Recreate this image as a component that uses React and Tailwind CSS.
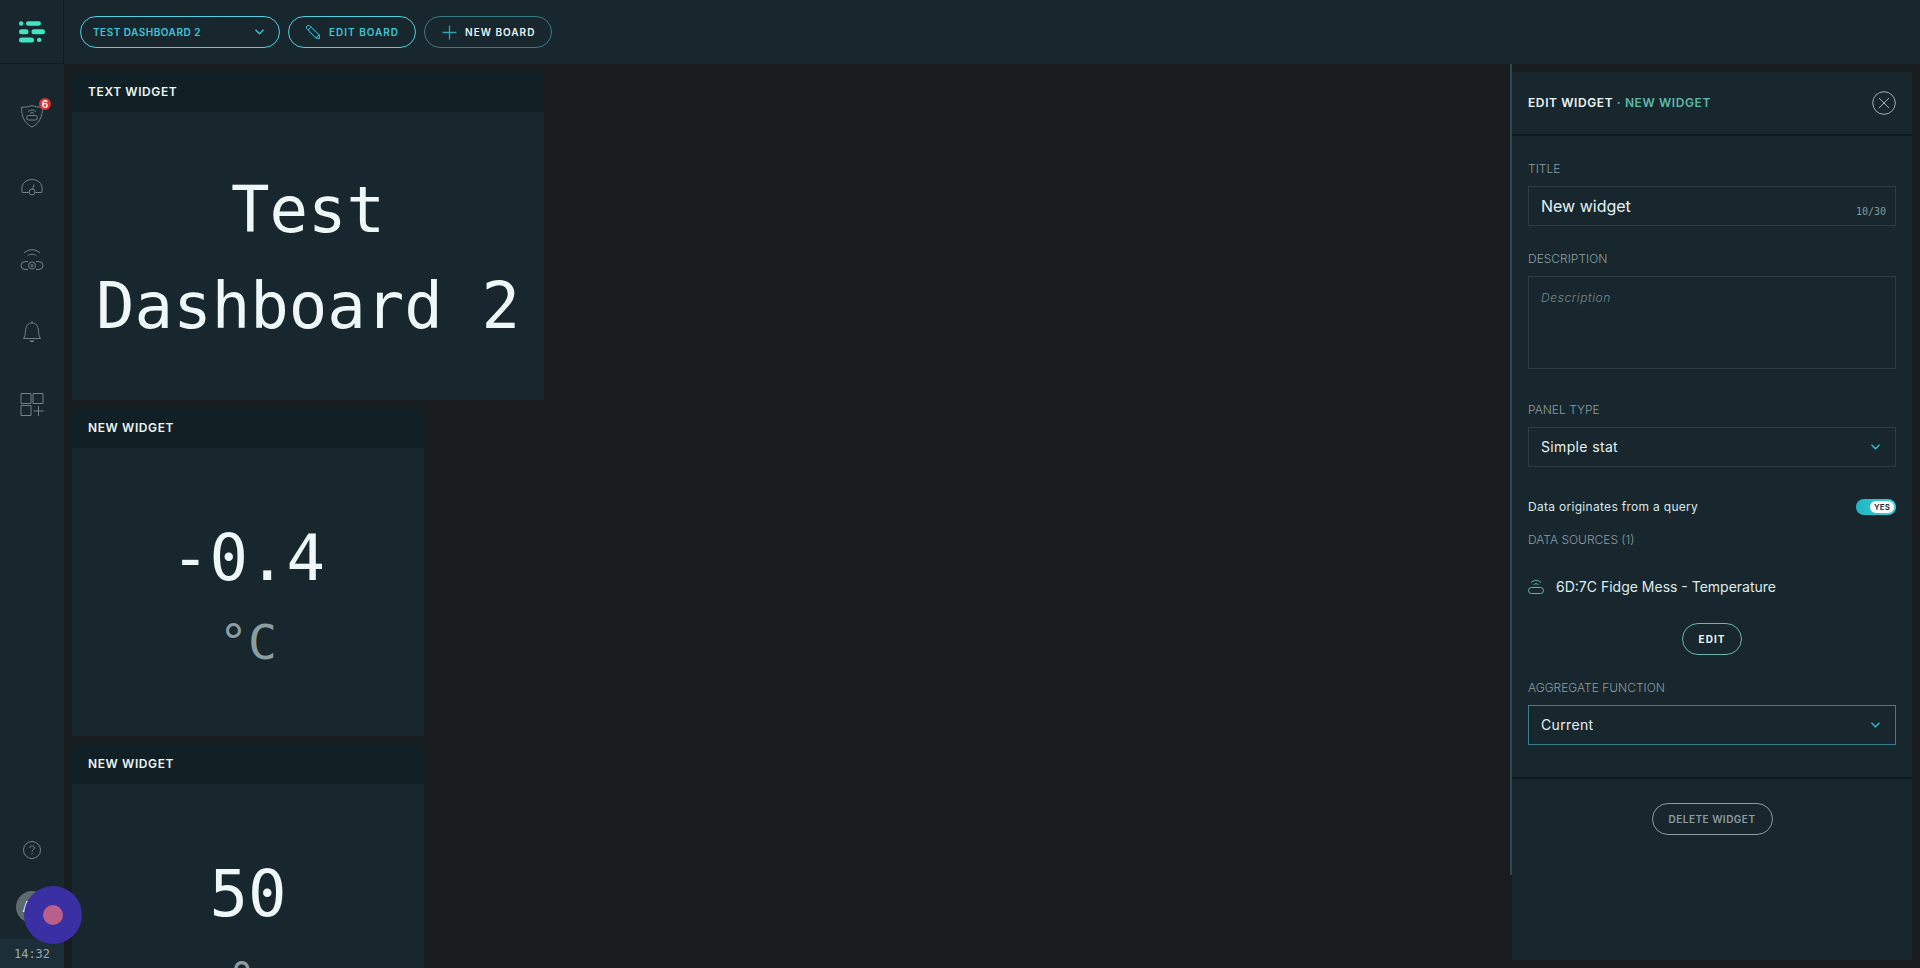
import {useState} from 'react'

const widgets = [
    {id: 1, title: 'Text widget', text: 'Test Dashboard 2', width: 'w-[472px]'},
    {id: 2, title: 'New widget', text: '-0.4', unit: '°C', width: 'w-[352px]'},
    {id: 3, title: 'New widget', text: '50', unit: '%', width: 'w-[352px]'},
]

const mono = "font-['DejaVu_Sans_Mono',monospace]"
const labelStyle = 'block mb-2 text-xs leading-[18px] font-light uppercase text-[#8c9da1]'
const fieldStyle = 'block w-full border bg-transparent px-3 text-[#e6f1f2] outline-none'

function Logo() {
    return (
        <svg width="26" height="22" viewBox="0 0 26 22" fill="#3ee6c4">
            <circle cx="2.2" cy="2.5" r="2.2" />
            <rect x="7" y="0.2" width="15" height="4.6" rx="2.3" />
            <rect x="0" y="8.2" width="9.5" height="5" rx="2.5" />
            <rect x="12.5" y="8.2" width="13.5" height="5" rx="2.5" />
            <rect x="0" y="16.4" width="15" height="5" rx="2.5" />
            <circle cx="20.2" cy="18.9" r="2.2" />
        </svg>
    )
}

function ShieldIcon() {
    return (
        <svg width="24" height="24" viewBox="0 0 24 24" fill="none" stroke="currentColor">
            <path d="M12 1.5C8.5 2.8 5 3.4 1.5 3.2c0 8.500 2.500 16 10.500 19.800 8-3.800 10.500-11.300 10.500-19.800C19 3.400 15.500 2.800 12 1.500z" />
            <rect x="6.500" y="11.500" width="11" height="4.500" rx="2.200" />
            <path d="M8 7.800c2-2.400 6-2.400 8 0M10 9.500c1.200-1.200 2.800-1.200 4 0" />
        </svg>
    )
}

function GaugeIcon() {
    return (
        <svg width="24" height="24" viewBox="0 0 24 24" fill="none" stroke="currentColor">
            <path d="M8.800 16.500H2.300C.2 9.500 4.500 3.500 12 3.500s11.800 6 9.700 13h-6.500" />
            <circle cx="12" cy="16" r="3" />
            <path d="M12.800 13L14 8.500" />
        </svg>
    )
}

function SensorIcon() {
    return (
        <svg width="24" height="24" viewBox="0 0 24 24" fill="none" stroke="currentColor">
            <path d="M4 5c4.500-4.400 11.500-4.400 16 0M7.500 8c2.600-2.400 6.400-2.400 9 0" />
            <path d="M8 13.500H5a4 4 0 1 0 0 8h3M16 13.500h3a4 4 0 1 1 0 8h-3" />
            <circle cx="12" cy="17.500" r="3.500" />
            <circle cx="12" cy="17.500" r="1" />
        </svg>
    )
}

function BellIcon() {
    return (
        <svg width="24" height="24" viewBox="0 0 24 24" fill="none" stroke="currentColor">
            <path d="M3.500 18.500h17c-1.500-2-1.800-4-2-7.500C18.200 6 16 3 12 3s-6.200 3-6.500 8c-.2 3.500-.5 5.500-2 7.500zM12 3V1" />
            <path d="M9.500 20.500h5c-.6 2.200-4.400 2.200-5 0z" fill="currentColor" stroke="none" />
        </svg>
    )
}

function BoardsIcon() {
    return (
        <svg width="24" height="24" viewBox="0 0 24 24" fill="none" stroke="currentColor">
            <path d="M1 1.500h10v10H1zM13 1.500h10v10H13zM1 13.500h10v10H1zM18.500 14v10M13.500 19h10" />
        </svg>
    )
}

function HelpIcon() {
    return (
        <svg width="18" height="18" viewBox="0 0 18 18" fill="none" stroke="currentColor">
            <circle cx="9" cy="9" r="8.500" />
            <path d="M6.700 7c0-3 4.700-3 4.700 0 0 1.700-2.400 1.700-2.400 3.700M9 12v1.200" />
        </svg>
    )
}

function Chevron({className}) {
    return (
        <svg className={className} width="9" height="6" viewBox="0 0 9 6" fill="none" stroke="currentColor" strokeWidth="1.3">
            <path d="M.5.8l4 4 4-4" />
        </svg>
    )
}

const links = [
    {name: 'Security', Icon: ShieldIcon, badge: 6},
    {name: 'Dashboard', Icon: GaugeIcon},
    {name: 'Sensors', Icon: SensorIcon},
    {name: 'Alerts', Icon: BellIcon},
    {name: 'Boards', Icon: BoardsIcon},
]

function Sidebar() {
    return (
        <aside className="w-16 shrink-0 flex flex-col bg-[#17272d] text-[#728388]">
            <a href="#" aria-label="Home" className="h-16 flex items-center justify-center border-r border-b border-[#0f1d22]">
                <Logo />
            </a>
            <nav className="flex-1 pt-4">
                {links.map(({name, Icon, badge}) => (
                    <a key={name} href="#" aria-label={name} className="h-[72px] flex items-center justify-center">
                        <span className="relative">
                            <Icon />
                            {badge && (
                                <span className="absolute -top-1.5 -right-[7px] size-3 rounded-full bg-[#dc3232] text-white text-[10px] leading-3 font-semibold text-center">{badge}</span>
                            )}
                        </span>
                    </a>
                ))}
            </nav>
            <div className="flex flex-col items-center">
                <button type="button" aria-label="Help" className="mb-8"><HelpIcon /></button>
                <button type="button" className="mb-4 size-8 rounded-full bg-[#5d6b6e] text-white text-sm font-medium">AB</button>
                <time className={`${mono} w-full bg-[#1c2f38] pt-[5px] pb-[3px] text-center text-xs leading-[21px] text-[#9aa9ad]`}>14:32</time>
            </div>
        </aside>
    )
}

function TopBar() {
    return (
        <header className="h-16 shrink-0 flex items-center gap-2 px-4 bg-[#17272d] text-[10px] font-semibold uppercase tracking-widest">
            <div className="relative">
                <select aria-label="Board" className="w-[200px] h-8 rounded-full border border-[#4fd0dc] pl-3 pr-8 appearance-none bg-transparent font-semibold uppercase tracking-wider text-[#3cc8dc] outline-none">
                    <option>Test dashboard 2</option>
                </select>
                <Chevron className="absolute right-4 top-[13px] text-[#3cc8dc] pointer-events-none" />
            </div>
            <button type="button" className="h-8 flex items-center gap-2 rounded-full border border-[#4fd0dc] px-4 uppercase text-[#3cc8dc]">
                <svg width="16" height="16" viewBox="0 0 16 16" fill="none" stroke="currentColor">
                    <path d="M1.500 4.200c-.8-1.700 1.200-3.500 2.800-2.600l10 9.200.2 3.700-3.800-.4zM3.200 6l2.700-2.900M11 13.600l3.300-2.800" />
                </svg>
                Edit board
            </button>
            <button type="button" className="h-8 flex items-center gap-2 rounded-full border border-[#3a7c86] px-4 uppercase text-[#e9f4f5]">
                <svg width="16" height="16" viewBox="0 0 16 16" fill="none" stroke="#3aa0ac" strokeWidth="1.300">
                    <path d="M8.500 1.500v14M1.500 8.500h14" />
                </svg>
                New board
            </button>
        </header>
    )
}

function Widget({widget}) {
    return (
        <section className={`${widget.width} h-[328px] shrink-0 flex flex-col bg-[#17272d]`}>
            <h2 className="h-10 px-4 flex items-center bg-[#112024] text-xs font-semibold uppercase tracking-wider text-[#ecf6f6]">{widget.title}</h2>
            <div className={`${mono} flex-1 px-4 pt-1 flex flex-col justify-center text-center`}>
                <p className="text-[64px] leading-[96px] text-[#eff8f9]">{widget.text}</p>
                {widget.unit && <p className="text-5xl leading-[72px] text-[#8b9da1]">{widget.unit}</p>}
            </div>
        </section>
    )
}

function EditPanel() {
    const [title, setTitle] = useState('New widget')
    const [description, setDescription] = useState('')
    const [query, setQuery] = useState(true)

    return (
        <div className="flex">
            <div className="w-0.5 h-[calc(100%-93px)] bg-[#2b4a52]"></div>
            <form className="w-[400px] my-2 mr-2 bg-[#17272d]" onSubmit={(e) => e.preventDefault()}>
                <div className="h-16 px-4 flex items-center justify-between border-b-2 border-[#0d1b20]">
                    <h2 className="text-xs font-semibold uppercase tracking-wider text-[#ecf6f6]">
                        Edit widget <span className="text-[#5fb9a8]">· New widget</span>
                    </h2>
                    <button type="button" aria-label="Close" className="text-[#9db0b4]">
                        <svg width="24" height="24" viewBox="0 0 24 24" fill="none" stroke="currentColor">
                            <circle cx="12" cy="12" r="11.300" />
                            <path d="M7 7l10 10M17 7L7 17" />
                        </svg>
                    </button>
                </div>
                <div className="px-4 pt-6 pb-8 border-b-2 border-[#0d1b20]">
                    <label htmlFor="title" className={labelStyle}>Title</label>
                    <div className="relative mb-6">
                        <input id="title" maxLength={30} value={title} onChange={(e) => setTitle(e.target.value)} className={`${fieldStyle} h-10 pr-16 border-[#2b3c42] text-base`} />
                        <span className={`${mono} absolute right-2.5 bottom-1 text-[10px] leading-5 text-[#87989c]`}>{title.length}/30</span>
                    </div>

                    <label htmlFor="description" className={labelStyle}>Description</label>
                    <textarea id="description" placeholder="Description" value={description} onChange={(e) => setDescription(e.target.value)} className={`${fieldStyle} h-[93px] mb-8 py-3 resize-none border-[#2b3c42] text-xs leading-[18px] tracking-wider placeholder:italic placeholder:font-light placeholder:text-[#77878b]`} />

                    <label htmlFor="type" className={labelStyle}>Panel type</label>
                    <div className="relative mb-8">
                        <select id="type" className={`${fieldStyle} h-10 appearance-none border-[#2b3c42] text-sm tracking-wide`}>
                            <option>Simple stat</option>
                        </select>
                        <Chevron className="absolute right-4 top-[17px] text-[#2fc3d3] pointer-events-none" />
                    </div>

                    <label className="mb-4 flex items-center justify-between text-xs leading-4 tracking-wide text-[#d9e6e8]">
                        Data originates from a query
                        <input type="checkbox" className="sr-only peer" checked={query} onChange={() => setQuery(!query)} />
                        <span className="w-10 h-4 p-0.5 flex justify-start peer-checked:justify-end rounded-full bg-linear-to-r from-[#1fb6c5] to-[#3ccfdb]">
                            <span className="w-6 h-3 rounded-full bg-white text-center text-[8px] leading-3 tracking-normal font-semibold text-[#17272d]">{query ? 'YES' : 'NO'}</span>
                        </span>
                    </label>

                    <h3 className="text-xs leading-[18px] font-light uppercase text-[#8c9da1]">Data sources (1)</h3>
                    <div className="mt-6 h-7 flex items-center gap-3 text-sm text-[#dfebec]">
                        <svg width="16" height="16" viewBox="0 0 16 16" fill="none" stroke="#5fb9a8">
                            <rect x=".5" y="8.500" width="15" height="6" rx="3" />
                            <path d="M3 3.500c2.800-2.700 7.200-2.700 10 0M5.500 5.800c1.500-1.400 3.500-1.400 5 0" />
                        </svg>
                        6D:7C Fidge Mess - Temperature
                    </div>
                    <div className="mt-[22px] mb-6 flex justify-center">
                        <button type="button" className="h-8 px-4 rounded-full border border-[#6bb5ac] text-[10px] font-bold uppercase tracking-widest text-[#ecf6f6]">Edit</button>
                    </div>

                    <label htmlFor="aggregate" className={labelStyle}>Aggregate function</label>
                    <div className="relative">
                        <select id="aggregate" className={`${fieldStyle} h-10 appearance-none border-[#3a8089] text-sm tracking-wide`}>
                            <option>Current</option>
                        </select>
                        <Chevron className="absolute right-4 top-[17px] text-[#2fc3d3] pointer-events-none" />
                    </div>
                </div>
                <div className="py-6 flex justify-center">
                    <button type="button" className="h-8 px-4 rounded-full border border-[#8b9da1] text-[10px] font-semibold uppercase tracking-wider text-[#8b9da1]">Delete widget</button>
                </div>
            </form>
        </div>
    )
}

export default function App() {
    return (
        <div className="h-screen flex overflow-hidden bg-[#191c1f] font-[Inter,sans-serif]">
            <Sidebar />
            <div className="flex-1 min-w-0 flex flex-col">
                <TopBar />
                <div className="flex-1 min-h-0 flex">
                    <main className="flex-1 p-2 flex flex-col gap-2 overflow-hidden">
                        {widgets.map((widget) => <Widget key={widget.id} widget={widget} />)}
                    </main>
                    <EditPanel />
                </div>
            </div>
            {/* floating record button */}
            <button type="button" aria-label="Record" className="fixed left-6 bottom-6 size-[58px] flex items-center justify-center rounded-full bg-[#3a2fa3]">
                <span className="size-5 rounded-full bg-[#b9608a]"></span>
            </button>
        </div>
    )
}
